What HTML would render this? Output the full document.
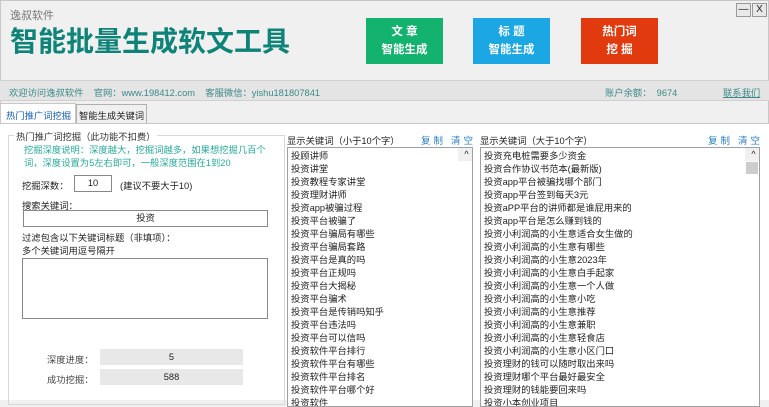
<!DOCTYPE html>
<html><head><meta charset="utf-8">
<style>
*{margin:0;padding:0;box-sizing:border-box}
body{width:769px;height:400px;overflow:hidden;background:#f0f0f0;font-family:"Liberation Sans","Noto Sans CJK SC",sans-serif;font-size:9.3px;color:#222;position:relative}
.abs{position:absolute;white-space:nowrap}
.btn{position:absolute;top:18px;width:77px;height:46px;color:#fff;font-weight:bold;font-size:11.5px;text-align:center;line-height:18px;padding-top:5px}
.list{position:absolute;background:#fff;border:1px solid #a0a0a0;overflow:hidden}
.list div{height:13px;line-height:13px;font-size:9.3px;padding-left:3px;white-space:nowrap}
.sb{position:absolute;right:0;top:0;bottom:0;width:14px;background:#f0f0f0}
.lnk{color:#2a7fc0;font-size:9.5px;letter-spacing:3px}
</style></head><body>
<div class="abs" style="left:0;top:0;width:769px;height:400px;border:1px solid #c8c8c8;border-bottom:none"></div>
<div class="abs" style="left:10px;top:7px;font-size:11px;color:#777">逸叔软件</div>
<div class="abs" style="left:10px;top:24px;font-size:28px;font-weight:bold;color:#0e8478;line-height:36px">智能批量生成软文工具</div>
<div class="btn" style="left:366px;background:#14b26f">文 章<br>智能生成</div>
<div class="btn" style="left:473px;background:#1aa7e4">标 题<br>智能生成</div>
<div class="btn" style="left:581px;background:#e03a0e">热门词<br>挖 掘</div>
<div class="abs" style="left:736px;top:3px;width:15px;height:14px;border:1px solid #999;background:#e8e8e8;font-size:10px;text-align:center;line-height:12px">—</div>
<div class="abs" style="left:752px;top:3px;width:15px;height:14px;border:1px solid #999;background:#e8e8e8;font-size:10px;text-align:center;line-height:12px">X</div>
<div class="abs" style="left:0;top:80px;width:769px;height:21px;background:#e4e4e4;border-top:1px solid #d0d0d0;border-bottom:1px solid #d0d0d0"></div>
<div class="abs" style="left:9px;top:85px;color:#3a8a88">欢迎访问逸叔软件&nbsp;&nbsp;&nbsp; 官网：www.198412.com&nbsp;&nbsp;&nbsp; 客服微信：yishu181807841</div>
<div class="abs" style="left:605px;top:85px;color:#3a8a88">账户余额：&nbsp;&nbsp;9674</div>
<div class="abs" style="left:723px;top:85px;color:#3a8a88;text-decoration:underline">联系我们</div>
<div class="abs" style="left:0;top:103px;width:76px;height:21px;background:#fff;border:1px solid #c8c8c8;border-bottom:none;color:#1a5fb0;padding:4px 0 0 5px">热门推广词挖掘</div>
<div class="abs" style="left:76px;top:104px;width:71px;height:19px;background:#f0f0f0;border:1px solid #b0b0b0;border-bottom:none;padding:3px 0 0 2px">智能生成关键词</div>
<div class="abs" style="left:0;top:123px;width:769px;height:277px;background:#fff;border-top:1px solid #c8c8c8"></div>
<div class="abs" style="left:8px;top:135px;width:277px;height:270px;border:1px solid #d8d8d8"></div>
<div class="abs" style="left:14px;top:129px;background:#fff;padding:0 2px;color:#333">热门推广词挖掘（此功能不扣费）</div>
<div class="abs" style="left:24px;top:144px;color:#2aa89a;line-height:13px">挖掘深度说明：深度越大，挖掘词越多，如果想挖掘几百个<br>词，深度设置为5左右即可，一般深度范围在1到20</div>
<div class="abs" style="left:22px;top:178px">挖掘深数：</div>
<div class="abs" style="left:74px;top:175px;width:38px;height:17px;border:1px solid #888;text-align:center;line-height:15px">10</div>
<div class="abs" style="left:120px;top:178px">(建议不要大于10)</div>
<div class="abs" style="left:22px;top:198px">搜索关键词：</div>
<div class="abs" style="left:23px;top:210px;width:245px;height:17px;border:1px solid #888;text-align:center;line-height:15px">投资</div>
<div class="abs" style="left:22px;top:232px;line-height:13px">过滤包含以下关键词标题（非填项）：<br>多个关键词用逗号隔开</div>
<div class="abs" style="left:22px;top:258px;width:246px;height:61px;border:1px solid #888"></div>
<div class="abs" style="left:47px;top:352px;color:#444">深度进度：</div>
<div class="abs" style="left:100px;top:349px;width:143px;height:16px;background:#e8e8e8;text-align:center;line-height:16px">5</div>
<div class="abs" style="left:47px;top:372px;color:#444">成功挖掘：</div>
<div class="abs" style="left:100px;top:369px;width:143px;height:16px;background:#e8e8e8;text-align:center;line-height:16px">588</div>
<div class="abs" style="left:287px;top:133px">显示关键词（小于10个字）</div>
<div class="abs lnk" style="left:421px;top:133px">复制</div>
<div class="abs lnk" style="left:451px;top:133px">清空</div>
<div class="abs" style="left:480px;top:133px">显示关键词（大于10个字）</div>
<div class="abs lnk" style="left:708px;top:133px">复制</div>
<div class="abs lnk" style="left:738px;top:133px">清空</div>
<div class="list" style="left:287px;top:147px;width:186px;height:260px;padding-top:2px">
<div>投顾讲师</div><div>投资讲堂</div><div>投资教程专家讲堂</div><div>投资理财讲师</div><div>投资app被骗过程</div><div>投资平台被骗了</div><div>投资平台骗局有哪些</div><div>投资平台骗局套路</div><div>投资平台是真的吗</div><div>投资平台正规吗</div><div>投资平台大揭秘</div><div>投资平台骗术</div><div>投资平台是传销吗知乎</div><div>投资平台违法吗</div><div>投资平台可以信吗</div><div>投资软件平台排行</div><div>投资软件平台有哪些</div><div>投资软件平台排名</div><div>投资软件平台哪个好</div><div>投资软件</div>
<div class="sb"><div style="font-size:9px;text-align:center;padding:0">^</div></div></div>
<div class="list" style="left:480px;top:147px;width:280px;height:260px;padding-top:2px">
<div>投资充电桩需要多少资金</div><div>投资合作协议书范本(最新版)</div><div>投资app平台被骗找哪个部门</div><div>投资app平台签到每天3元</div><div>投资aPP平台的讲师都是谁屁用来的</div><div>投资app平台是怎么赚到钱的</div><div>投资小利润高的小生意适合女生做的</div><div>投资小利润高的小生意有哪些</div><div>投资小利润高的小生意2023年</div><div>投资小利润高的小生意白手起家</div><div>投资小利润高的小生意一个人做</div><div>投资小利润高的小生意小吃</div><div>投资小利润高的小生意推荐</div><div>投资小利润高的小生意兼职</div><div>投资小利润高的小生意轻食店</div><div>投资小利润高的小生意小区门口</div><div>投资理财的钱可以随时取出来吗</div><div>投资理财哪个平台最好最安全</div><div>投资理财的钱能要回来吗</div><div>投资小本创业项目</div>
<div class="sb"><div style="font-size:9px;text-align:center;padding:0">^</div><div style="position:absolute;top:14px;left:1px;width:12px;height:12px;background:#cdcdcd;padding:0"></div></div></div>
</body></html>
